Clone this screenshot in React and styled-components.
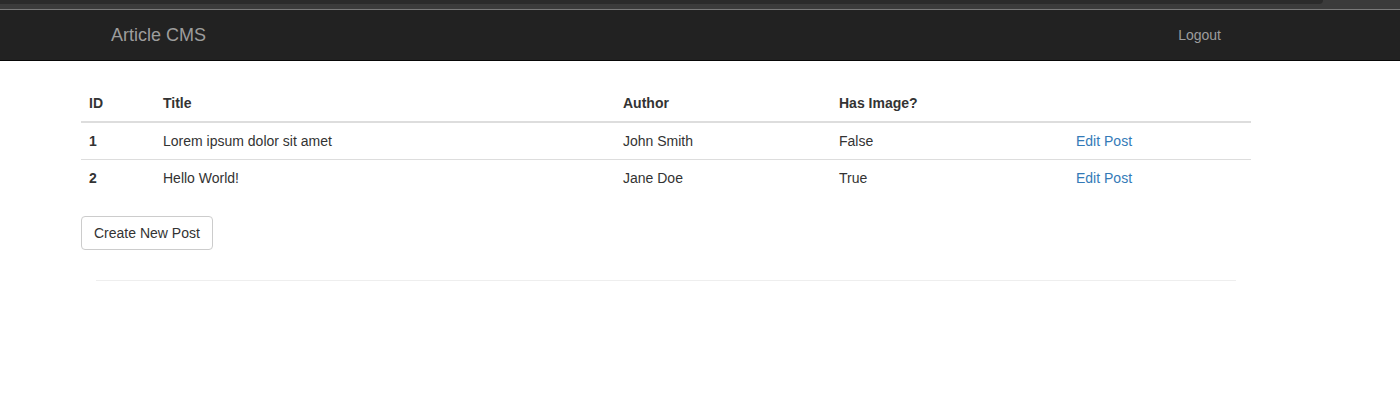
import React from "react";
import styled, { createGlobalStyle } from "styled-components";

const GlobalStyle = createGlobalStyle`
  html, body {
    margin: 0;
    padding: 0;
    background: #fff;
  }
  body {
    font-family: "Liberation Sans", Arial, sans-serif;
    font-size: 14px;
    line-height: 20px;
    color: #333;
  }
`;

const posts = [
  { id: 1, title: "Lorem ipsum dolor sit amet", author: "John Smith", hasImage: "False" },
  { id: 2, title: "Hello World!", author: "Jane Doe", hasImage: "True" },
];

const columns = [
  { label: "ID", width: 74 },
  { label: "Title", width: 460 },
  { label: "Author", width: 216 },
  { label: "Has Image?", width: 237 },
  { label: "", width: 183 },
];

function App() {
  return (
    <>
      <GlobalStyle />
      <ScrollStrip>
        <ScrollThumb />
      </ScrollStrip>
      <Navbar>
        <NavContainer>
          <Brand href="#">Article CMS</Brand>
          <NavLink href="#">Logout</NavLink>
        </NavContainer>
      </Navbar>
      <Page>
        <Table>
          <colgroup>
            {columns.map((c, i) => (
              <col key={i} style={{ width: c.width }} />
            ))}
          </colgroup>
          <thead>
            <tr>
              {columns.map((c, i) => (
                <Th key={i}>{c.label}</Th>
              ))}
            </tr>
          </thead>
          <tbody>
            {posts.map((p) => (
              <tr key={p.id}>
                <Td $bold>{p.id}</Td>
                <Td>{p.title}</Td>
                <Td>{p.author}</Td>
                <Td>{p.hasImage}</Td>
                <Td>
                  <EditLink href="#">Edit Post</EditLink>
                </Td>
              </tr>
            ))}
          </tbody>
        </Table>
        <Button type="button">Create New Post</Button>
        <Rule />
      </Page>
    </>
  );
}

const ScrollStrip = styled.div`
  height: 9px;
  background: #3b3b3b;
  border-bottom: 1px solid #7a7a7a;
`;

const ScrollThumb = styled.div`
  width: 1323px;
  height: 4px;
  background: #2b2b2b;
  border-bottom-right-radius: 4px;
`;

const Navbar = styled.nav`
  height: 50px;
  background: #222;
  border-bottom: 1px solid #080808;
`;

const NavContainer = styled.div`
  width: 1140px;
  margin-left: 96px;
  height: 100%;
  display: flex;
  align-items: center;
  justify-content: space-between;
`;

const Brand = styled.a`
  padding: 0 15px;
  font-size: 18px;
  line-height: 20px;
  color: #9d9d9d;
  text-decoration: none;
`;

const NavLink = styled.a`
  padding: 0 15px;
  font-size: 14px;
  line-height: 20px;
  color: #9d9d9d;
  text-decoration: none;
`;

const Page = styled.main`
  width: 1170px;
  margin-left: 81px;
  padding-top: 24px;
`;

const Table = styled.table`
  width: 1170px;
  border-collapse: collapse;
  border-spacing: 0;
  table-layout: fixed;
  margin-bottom: 20px;
`;

const Th = styled.th`
  padding: 8px;
  text-align: left;
  font-weight: bold;
  line-height: 20px;
  border-bottom: 2px solid #ddd;
`;

const Td = styled.td`
  padding: 8px;
  line-height: 20px;
  border-top: 1px solid #ddd;
  font-weight: ${(p) => (p.$bold ? "bold" : "normal")};
  tr:first-child > & {
    border-top: 0;
  }
`;

const EditLink = styled.a`
  color: #337ab7;
  text-decoration: none;
`;

const Button = styled.button`
  display: block;
  font-family: inherit;
  font-size: 14px;
  line-height: 20px;
  color: #333;
  background: #fff;
  border: 1px solid #ccc;
  border-radius: 4px;
  padding: 6px 12px;
  cursor: pointer;
`;

const Rule = styled.hr`
  margin: 30px 15px 0;
  border: 0;
  border-top: 1px solid #eee;
`;

export default App;
